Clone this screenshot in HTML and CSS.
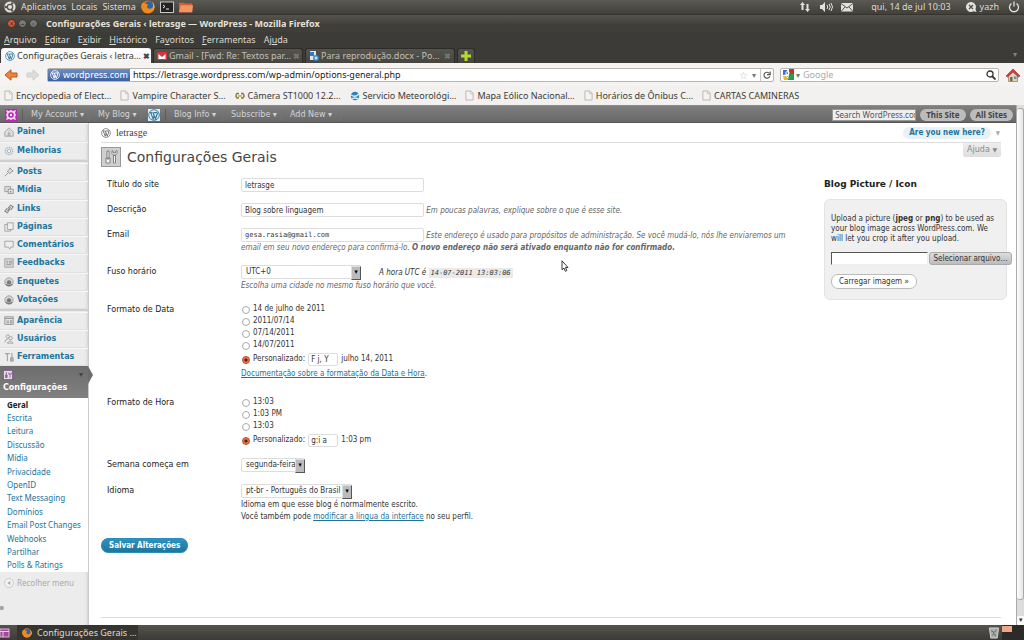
FILE: index.html
```html
<!DOCTYPE html>
<html lang="pt-br">
<head>
<meta charset="utf-8">
<title>Configurações Gerais ‹ letrasge — WordPress</title>
<link rel="stylesheet" href="styles.css">
</head>
<body>
<svg class="defs" width="0" height="0" aria-hidden="true">
  <symbol id="wp" viewBox="0 0 20 20"><circle cx="10" cy="10" r="8.8" fill="none" stroke="currentColor" stroke-width="1.6"/><path d="M3.5 6h4M9 6h5M4.5 6l4 10.500L10.500 10M8.500 6l4 10.500L15.500 8c.3-1.500-1-2-1-3.500" fill="none" stroke="currentColor" stroke-width="2"/></symbol>
  <symbol id="page" viewBox="0 0 10 12"><path d="M1 1h5.500L9 3.500V11H1z" fill="#f4f3f0" stroke="#b5b3af"/><path d="M6 1v3h3" fill="none" stroke="#c5c3bf"/></symbol>
  <symbol id="fox" viewBox="0 0 14 14"><circle cx="7" cy="7" r="6.500" fill="#e8701a"/><circle cx="8" cy="5.500" r="4.200" fill="#2f62a8"/><path d="M.6 4C2 2 3 3 5 4c2 0 3 1 1 2 0 3 3 4 6 1 1-2 0-4-1-5 3 2 3 6 1 9-3 3-8 3-10 0C0 9 0 6 .6 4z" fill="#f08a1c"/><path d="M11 2c3 3 3 6 1 9 1-3 1-6-1-9z" fill="#fbd047"/></symbol>
  <symbol id="gear" viewBox="0 0 12 12"><circle cx="6" cy="6" r="4.500" fill="#e1e5ea" stroke="#a9b4c2" stroke-width="1.400" stroke-dasharray="1.500 .8"/><circle cx="6" cy="6" r="2" fill="#f4f4f4" stroke="#9fafc2"/></symbol>
  <symbol id="poll" viewBox="0 0 12 12"><circle cx="6" cy="6" r="5" fill="#d5d5d5" stroke="#999"/><circle cx="6" cy="6.500" r="2.600" fill="#777"/><path d="M2 8.500c2 2.500 6 2.500 8 0" fill="none" stroke="#777" stroke-width="1.500"/></symbol>
</svg>

<header class="panel">
  <svg class="i12" viewBox="0 0 12 12"><circle cx="6" cy="6" r="5.600" fill="#e4e1da"/><circle cx="6" cy="6" r="2.700" fill="none" stroke="#55534d" stroke-width="1.300"/><circle cx="1.800" cy="6" r="1.200" fill="#55534d"/><circle cx="8.200" cy="2.400" r="1.200" fill="#55534d"/><circle cx="8.200" cy="9.600" r="1.200" fill="#55534d"/></svg>
  <span>Aplicativos</span><span>Locais</span><span>Sistema</span>
  <svg class="i14" viewBox="0 0 14 14"><use href="#fox"/></svg>
  <svg class="i14" viewBox="0 0 14 14"><rect x=".5" y="2" width="13" height="10.500" fill="#222" stroke="#c9c7c2"/><path d="M3 5l2 1.500L3 8M6 9h3" fill="none" stroke="#eee"/></svg>
  <svg class="i14" viewBox="0 0 16 14"><path d="M0 2h6l1 1h8v10H0z" fill="#d8602a"/><path d="M2 5h14l-1 8H0z" fill="#f59560"/></svg>
  <div class="tray">
    <svg class="i12" viewBox="0 0 12 12"><path d="M3.500 1L6 4H4.500v5h-2V4H1zM8.500 11L6 8h1.500V3h2v5H11z" fill="#e4e1da"/></svg>
    <svg class="i14 sound" viewBox="0 0 14 12"><path d="M1 4h2l3-3v10L3 8H1z" fill="#e4e1da"/><path d="M8 4q1.500 2 0 4M10 3q2.500 3 0 6M12 2q3 4 0 8" fill="none" stroke="#e4e1da"/></svg>
    <svg class="i12 mail" viewBox="0 0 12 12"><path d="M0 2h12v8.500H0z" fill="#e4e1da"/><path d="M0 2.500l6 4.500 6-4.500M0 10.500L4 6M12 10.500L8 6" fill="none" stroke="#55534d"/></svg>
    <time>qui, 14 de jul 10:03</time>
    <svg class="i12" viewBox="0 0 12 12"><path d="M6 1a5 5 0 1 0 2.500 9.300L11.500 11 10.500 8A5 5 0 0 0 6 1z" fill="#e4e1da"/><path d="M4 4l4 4M8 4L4 8" stroke="#55534d" stroke-width="1.400"/></svg>
    <span class="user">yazh</span>
    <svg class="i12" viewBox="0 0 12 12"><path d="M3.500 2.500a4.500 4.500 0 1 0 5 0M6 .5v5" fill="none" stroke="#e4e1da" stroke-width="1.300"/></svg>
  </div>
</header>

<div class="titlebar">
  <button class="wb close" aria-label="Fechar">×</button><button class="wb" aria-label="Minimizar">–</button><button class="wb" aria-label="Maximizar">▫</button>
  <span class="wtitle">Configurações Gerais ‹ letrasge — WordPress - Mozilla Firefox</span>
</div>
<nav class="menubar"><span><u>A</u>rquivo</span><span><u>E</u>ditar</span><span>E<u>x</u>ibir</span><span><u>H</u>istórico</span><span>Fa<u>v</u>oritos</span><span><u>F</u>erramentas</span><span>Aj<u>u</u>da</span></nav>
<div class="tabs">
  <div class="tab on"><svg class="i10 blue" viewBox="0 0 20 20"><use href="#wp"/></svg><span>Configurações Gerais ‹ letra…</span><b>✖</b></div>
  <div class="tab"><svg class="i10" viewBox="0 0 10 10"><rect y="1" width="10" height="8" rx="1" fill="#d8343b"/><path d="M1.500 3L5 6l3.500-3v5h-7z" fill="#fff"/></svg><span>Gmail - [Fwd: Re: Textos par…</span><b>✖</b></div>
  <div class="tab"><svg class="i10" viewBox="0 0 10 10"><path d="M1 0h6v9H1z" fill="#dbe9f5"/><rect x="1" y="1" width="4" height="4" fill="#2f7cc4"/><circle cx="7" cy="7" r="3" fill="#3988d0"/><path d="M5.500 7h3M7 5.500v3" stroke="#fff"/></svg><span>Para reprodução.docx - Po…</span><b>✖</b></div>
  <div class="tab plus"><svg class="i10" viewBox="0 0 10 10"><path d="M3.500 0h3v3.500H10v3H6.500V10h-3V6.500H0v-3h3.500z" fill="#b3dc2d"/></svg></div>
  <span class="tabmenu">▾</span>
</div>
<div class="navbar">
  <svg class="back" viewBox="0 0 14 12"><path d="M7 .8L1 6l6 5.200V8h6V4H7z" fill="#f08540" stroke="#b8561c"/></svg>
  <svg class="fwd" viewBox="0 0 14 12"><path d="M7 .8L13 6l-6 5.200V8H1V4h6z" fill="#dddcda" stroke="#cfcecb"/></svg>
  <div class="url"><span class="ident"><svg class="i10" viewBox="0 0 20 20"><use href="#wp"/></svg>wordpress.com</span><input aria-label="Endereço" value="https://letrasge.wordpress.com/wp-admin/options-general.php"><span class="star">☆</span><span class="dd">▾</span><button class="reload" aria-label="Recarregar"><svg class="i8" viewBox="0 0 10 10"><path d="M8 3A3.700 3.700 0 1 0 8.500 6.500M5 4.500h4V.5" fill="none" stroke="#555" stroke-width="1.400"/></svg></button></div>
  <div class="search"><svg class="i11" viewBox="0 0 11 11"><rect width="11" height="11" fill="#fff"/><path d="M6 0h5v5H6z" fill="#c9312b"/><path d="M6 5h5v6H5z" fill="#2d9a47"/><path d="M0 7h5v4H1z" fill="#f0b52c"/><path d="M0 1h4l1 4-5 1z" fill="#3d6fc4"/><circle cx="4.500" cy="4" r="1.600" fill="none" stroke="#fff"/><path d="M5 6q-3 1 0 3" fill="none" stroke="#fff"/></svg><span class="dd">▾</span><input aria-label="Pesquisar" placeholder="Google"><svg class="i10" viewBox="0 0 10 10"><circle cx="4" cy="4" r="3" fill="none" stroke="#333" stroke-width="1.300"/><path d="M6 6l3.500 3.500" stroke="#333" stroke-width="1.800"/></svg></div>
  <svg class="home" viewBox="0 0 14 14"><path d="M2.500 7v6.500h9V7L7 3z" fill="#e5d3ac" stroke="#8b7650" stroke-width=".7"/><path d="M0 8l7-7 7 7-1.500 1L7 4 1.500 9z" fill="#d23c47" stroke="#98242e" stroke-width=".6"/><rect x="4" y="9" width="2.500" height="4" fill="#7d6647"/><rect x="8" y="8.500" width="2.500" height="2.500" fill="#5e92c7"/></svg>
</div>
<div class="bookmarks">
  <a href="#"><svg class="pg"><use href="#page"/></svg>Encyclopedia of Elect…</a>
  <a href="#"><svg class="pg"><use href="#page"/></svg>Vampire Character S…</a>
  <a href="#"><svg class="i10" viewBox="0 0 10 10"><path d="M4 2.500H2Q0 5 2 7h2M6 2.500h2Q10 5 8 7H6" fill="none" stroke="#7d7d42" stroke-width="1.400"/><path d="M3 5h4" stroke="#c7a53b" stroke-width="1.500"/></svg>Câmera ST1000 12.2…</a>
  <a href="#"><svg class="i10" viewBox="0 0 10 10"><circle cx="5" cy="5" r="4.200" fill="#2e83b8"/><path d="M1 4q4 3 8-1M2 8q3-2 6 0" stroke="#d8eef6" stroke-width="1.300" fill="none"/></svg>Servicio Meteorológi…</a>
  <a href="#"><svg class="pg"><use href="#page"/></svg>Mapa Eólico Nacional…</a>
  <a href="#"><svg class="pg"><use href="#page"/></svg>Horários de Ônibus C…</a>
  <a href="#"><svg class="pg"><use href="#page"/></svg>CARTAS CAMINERAS</a>
</div>

<div class="viewport">
<div class="doc">
  <nav class="adminbar">
    <span class="avatar"><svg class="i12" viewBox="0 0 12 12"><rect width="12" height="12" fill="#b428b4"/><path d="M1 1l3 1 2-1 2 1 3-1-1 3 1 2-1 2 1 3-3-1-2 1-2-1-3 1 1-3-1-2 1-2z" fill="#f6d8f6"/><circle cx="6" cy="6" r="2.800" fill="#b428b4"/><circle cx="6" cy="6" r="1.200" fill="#fff"/></svg></span>
    <a class="a1" href="#">My Account ▾</a><a class="a2" href="#">My Blog ▾</a>
    <span class="avatar second"><svg class="i12" viewBox="0 0 20 20"><rect width="20" height="20" fill="#dcebf4"/><g color="#3b7b9e"><use href="#wp"/></g></svg></span>
    <a class="a3" href="#">Blog Info ▾</a><a class="a4" href="#">Subscribe ▾</a><a class="a5" href="#">Add New ▾</a>
    <form class="sitesearch"><input aria-label="Search" value="Search WordPress.com"><button type="button">This Site</button><button type="button">All Sites</button></form>
  </nav>
  <div class="wrap">
    <aside class="side">
      <ul class="grp g2">
        <li><svg class="i10" viewBox="0 0 12 12"><path d="M1 6l5-5 5 5v5H1zM5 11V7h2v4M6 4v1" fill="#e3e3e3" stroke="#999"/></svg><a href="#">Painel</a></li>
        <li><svg class="i10" viewBox="0 0 12 12"><use href="#gear"/></svg><a href="#">Melhorias</a></li>
      </ul>
      <ul class="grp g8">
        <li><svg class="i10" viewBox="0 0 12 12"><path d="M7 1l4 4-2 .5L7 8 4 5l2.500-2zM5 7L1 11" fill="#ddd" stroke="#8b8b8b"/></svg><a href="#">Posts</a></li>
        <li><svg class="i10" viewBox="0 0 12 12"><rect x="1" y="2" width="7" height="6" fill="#ddd" stroke="#999"/><rect x="5" y="5" width="6" height="5" fill="#eee" stroke="#888"/><circle cx="8" cy="8" r="1" fill="#888"/></svg><a href="#">Mídia</a></li>
        <li><svg class="i10" viewBox="0 0 12 12"><path d="M5 5l3-3.500 3 2L8 7M7 6l-3 4.500-3-2L4 5M4 8l4-4" fill="none" stroke="#888" stroke-width="1.300"/></svg><a href="#">Links</a></li>
        <li><svg class="i10" viewBox="0 0 12 12"><path d="M4 1h7v8H4zM4 3H1v8h7V9" fill="#eee" stroke="#999"/></svg><a href="#">Páginas</a></li>
        <li><svg class="i10" viewBox="0 0 12 12"><path d="M1 1.500h10v7H8L7 11 5 8.500H1z" fill="#eee" stroke="#999"/></svg><a href="#">Comentários</a></li>
        <li><svg class="i10" viewBox="0 0 12 12"><rect x="1" y="1" width="10" height="10" fill="#ddd" stroke="#999"/><path d="M3 4h2M3 6h2M3 8h6M6 4h4M6 6h4" stroke="#888"/></svg><a href="#">Feedbacks</a></li>
        <li><svg class="i10" viewBox="0 0 12 12"><use href="#poll"/></svg><a href="#">Enquetes</a></li>
        <li><svg class="i10" viewBox="0 0 12 12"><use href="#poll"/></svg><a href="#">Votações</a></li>
      </ul>
      <ul class="grp g3">
        <li><svg class="i10" viewBox="0 0 12 12"><rect x="1" y="1" width="10" height="9" fill="#e5e5e5" stroke="#888"/><path d="M1 3h10M3 6h3M3 8h3" stroke="#888"/><rect x="7" y="5" width="3" height="4" fill="#aaa"/></svg><a href="#">Aparência</a></li>
        <li><svg class="i10" viewBox="0 0 12 12"><circle cx="4.500" cy="3" r="2" fill="#eee" stroke="#999"/><circle cx="8" cy="5" r="2" fill="#eee" stroke="#999"/><path d="M1 10q1-5 4-4M4 11q3-5 7 0z" fill="#eee" stroke="#999"/></svg><a href="#">Usuários</a></li>
        <li><svg class="i10" viewBox="0 0 12 12"><path d="M1 2h6M4 2v9M9.500 1v10M8 7h3v4H8z" fill="#ddd" stroke="#999" stroke-width="1.200"/></svg><a href="#">Ferramentas</a></li>
      </ul>
      <div class="current"><div class="crow"><svg class="i10" viewBox="0 0 12 12"><rect x=".5" y=".5" width="11" height="11" fill="#e8dcec" stroke="#80598c"/><path d="M4 2.500V9M3 6h2v3H3zM8.500 5v4.500M7 3v2h3V3" fill="none" stroke="#80598c"/></svg><span>▾</span></div>Configurações</div>
      <ul class="sub"><li><b>Geral</b></li><li><a href="#">Escrita</a></li><li><a href="#">Leitura</a></li><li><a href="#">Discussão</a></li><li><a href="#">Mídia</a></li><li><a href="#">Privacidade</a></li><li><a href="#">OpenID</a></li><li><a href="#">Text Messaging</a></li><li><a href="#">Domínios</a></li><li><a href="#">Email Post Changes</a></li><li><a href="#">Webhooks</a></li><li><a href="#">Partilhar</a></li><li><a href="#">Polls &amp; Ratings</a></li></ul>
      <div class="collapse"><svg class="i10" viewBox="0 0 12 12"><circle cx="6" cy="6" r="5.300" fill="#f3f3f3" stroke="#c5c5c5"/><path d="M7.500 3.500v5L4 6z" fill="#aaa"/></svg>Recolher menu</div>
      <svg class="speck" viewBox="0 0 5 4"><path d="M0 1h3M0 3h3" stroke="#666"/><path d="M3 .5v3" stroke="#888"/></svg>
    </aside>
    <main>
      <div class="head"><svg class="i10 grey" viewBox="0 0 20 20"><use href="#wp"/></svg><a class="blog" href="#">letrasge</a><a class="new" href="#">Are you new here?</a><span class="newdd">▼</span></div>
      <div class="titlerow">
        <svg class="toolicon" viewBox="0 0 20 20"><rect x=".5" y=".5" width="19" height="19" fill="#cfcfcf" stroke="#999"/><path d="M6 4h2v8H6zM5 11h4v5H5zM12.500 8h2v8h-2zM11 3.500v3l2 2h1l2-2v-3l-1.500 1v1.500h-2V4.500z" fill="#f5f5f5" stroke="#777" stroke-width=".9"/></svg>
        <h1>Configurações Gerais</h1><button class="help">Ajuda <small>▼</small></button>
      </div>
      <div class="cols">
      <form class="settings">
        <div class="row"><label class="th" for="t">Título do site</label><div><input class="txt" id="t" value="letrasge"></div></div>
        <div class="row"><label class="th" for="d">Descrição</label><div><input class="txt" id="d" value="Blog sobre linguagem"> <em>Em poucas palavras, explique sobre o que é esse site.</em></div></div>
        <div class="row"><label class="th" for="e">Email</label><div><input class="txt mono" id="e" value="gesa.rasia@gmail.com"> <em>Este endereço é usado para propósitos de administração. Se você mudá-lo, nós lhe enviaremos um<br>email em seu novo endereço para confirmá-lo. <b>O novo endereço não será ativado enquanto não for confirmado.</b></em></div></div>
        <div class="row"><label class="th" for="z">Fuso horário</label><div><div class="zone"><span class="sel wide"><select id="z"><option>UTC+0</option></select></span><i class="utc">A hora UTC é <code>14-07-2011 13:03:06</code></i></div><div class="line"><em>Escolha uma cidade no mesmo fuso horário que você.</em></div></div></div>
        <div class="row date"><span class="th">Formato de Data</span><div>
          <label class="opt"><input type="radio" name="df">14 de julho de 2011</label>
          <label class="opt"><input type="radio" name="df">2011/07/14</label>
          <label class="opt"><input type="radio" name="df">07/14/2011</label>
          <label class="opt"><input type="radio" name="df">14/07/2011</label>
          <div class="opt custom"><label><input type="radio" name="df" checked><span>Personalizado:</span></label><input class="txt tiny" aria-label="Formato de data personalizado" value="F j, Y"><span>julho 14, 2011</span></div>
          <div class="docs"><a href="#">Documentação sobre a formatação da Data e Hora</a>.</div></div></div>
        <div class="row time"><span class="th">Formato de Hora</span><div>
          <label class="opt"><input type="radio" name="tf">13:03</label>
          <label class="opt"><input type="radio" name="tf">1:03 PM</label>
          <label class="opt"><input type="radio" name="tf">13:03</label>
          <div class="opt custom"><label><input type="radio" name="tf" checked><span>Personalizado:</span></label><input class="txt tiny" aria-label="Formato de hora personalizado" value="g:i a"><span>1:03 pm</span></div></div></div>
        <div class="row"><label class="th" for="w">Semana começa em</label><div class="stack"><span class="sel week"><select id="w"><option>segunda-feira</option></select></span></div></div>
        <div class="row"><label class="th" for="l">Idioma</label><div class="stack"><span class="sel lang"><select id="l"><option>pt-br - Português do Brasil</option></select></span><div class="line">Idioma em que esse blog é normalmente escrito.</div><div class="line">Você também pode <a href="#">modificar a língua da interface</a> no seu perfil.</div></div></div>
        <button class="save" type="button">Salvar Alterações</button>
      </form>
      <section class="picture"><h2>Blog Picture / Icon</h2>
        <div class="box"><p>Upload a picture (<b>jpeg</b> or <b>png</b>) to be used as your blog image across WordPress.com. We will let you crop it after you upload.</p>
        <div class="file"><input aria-label="Arquivo"><button type="button">Selecionar arquivo…</button></div>
        <button class="upload" type="button">Carregar imagem »</button></div>
      </section>
      </div>
      <div class="footline"></div>
    </main>
  </div>
</div>
<div class="scroll"><i></i><span>▾</span></div>
</div>

<footer class="taskbar">
  <svg class="i10" viewBox="0 0 10 10"><rect x="0" y="1" width="9" height="8" fill="#a04a98" stroke="#e0b4dc"/><path d="M0 3.500h9M3 3.500V9" stroke="#e8c8e6"/></svg>
  <button class="task"><svg class="i10" viewBox="0 0 14 14"><use href="#fox"/></svg>Configurações Gerais …</button>
  <div class="corner"><svg class="i12" viewBox="0 0 12 13"><path d="M1 1h10l-1.500 11h-7z" fill="#a9aeaa" stroke="#d7dad6"/><path d="M3 4l3 2 3-3M4 9l2-2 2 3" stroke="#5c625f" fill="none"/></svg><span class="ws"><i></i><i></i></span></div>
</footer>
<svg class="cursor" viewBox="0 0 8 12"><path d="M1 .8v9l2-1.700 1.300 3.200 1.500-.7L4.500 7.500H7z" fill="#fff" stroke="#222" stroke-width=".9"/></svg>
</body>
</html>
```
FILE: styles.css
```css
* { box-sizing: border-box; }
html, body { height: 100%; }
body { margin: 0; display: flex; flex-direction: column; overflow: hidden; font: 8px/12px "Noto Sans", sans-serif; color: #333; background: #fff; }
input, button, select { font: inherit; color: inherit; margin: 0; padding: 0; border: 0; background: none; min-width: 0; }
ul { list-style: none; margin: 0; padding: 0; }
svg { flex: none; display: block; }
.defs { position: absolute; }
.i8 { width: 8px; height: 8px; }
.i10 { width: 10px; height: 10px; }
.i11 { width: 11px; height: 11px; }
.i12 { width: 12px; height: 12px; }
.i14 { width: 14px; height: 14px; }

.panel, .titlebar, .menubar, .tabs, .navbar, .bookmarks, .taskbar { flex: none; display: flex; align-items: center; font-size: 9px; white-space: nowrap; }
.panel { height: 15px; padding: 0 4px; gap: 5px; background: linear-gradient(#5b5953, #403f3a); color: #dfdbd2; border-bottom: 1px solid #35342f; }
.tray { margin-left: auto; display: flex; align-items: center; }
.sound { margin-left: 8px; }
.mail { margin-left: 8px; }
.panel .tray { margin-right: 0; }
.tray time { margin: 0 14px 0 20px; padding-left: 0; }
.mail + time { margin-left: 18px; padding-right: 0; }
.user { margin: 0 9px 0 3px; }
.titlebar { height: 17px; padding: 0 7px; gap: 2px; background: linear-gradient(#54534d, #3f3e39 60%); color: #e6e2da; }
.wb { width: 9px; height: 9px; border-radius: 50%; background: #7b7973; color: #3a3935; font-size: 8px; line-height: 7px; border: 1px solid #33322e; }
.wb.close { background: #e9572b; }
.wtitle { margin-left: 6px; font-weight: bold; }
.menubar { height: 16px; padding: 0 4px; gap: 8px; background: #3c3b37; color: #dfdbd2; }
.tabs { height: 15px; padding: 0 1px; gap: 2px; background: #3c3b37; color: #c4c1ba; align-items: stretch; }
.tab { width: 150px; display: flex; align-items: center; gap: 2px; padding: 0 3px; border-radius: 3px 3px 0 0; background: linear-gradient(#55534e, #46453f); border: 1px solid #2c2b28; border-bottom: 0; }
.tab b { margin-left: auto; color: #77756f; font-size: 8px; }
.tab.on { background: linear-gradient(#fff, #f2f1f0); color: #3c3b37; border-color: #f8f7f6; }
.tab.on b { color: #444; }
.tab.plus { width: 18px; }
.tabmenu { margin-left: auto; padding-right: 6px; color: #85837d; font-size: 8px; }
.blue { color: #3d7fa5; }
.grey { color: #777; }
.navbar { height: 23px; padding: 0 4px; background: #f4f3f2; }
.back, .fwd { width: 14px; height: 12px; }
.fwd { margin-left: 8px; }
.url, .search { display: flex; align-items: center; height: 14px; background: #fff; border: 1px solid #b9b5ae; border-radius: 2px; }
.url { flex: 1; margin-left: 7px; }
.url input { flex: 1; padding-left: 3px; height: 12px; color: #222; }
.ident { display: flex; align-items: center; gap: 3px; height: 12px; padding: 0 2px; background: linear-gradient(#6d8dc4, #3d619f); color: #fff; }
.star { color: #bbb; font-size: 10px; }
.dd { color: #777; font-size: 8px; padding: 0 4px; }
.reload { height: 12px; padding: 0 2px; border-left: 1px solid #c9c5be; }
.search { width: 219px; margin-left: 6px; padding: 0 2px; }
.search .dd { padding: 0 3px 0 2px; }
.search input { flex: 1; }
.search input::placeholder { color: #aaa; }
.home { width: 14px; height: 14px; margin-left: 7px; }
.bookmarks { height: 19px; padding: 0 4px; gap: 9px; background: #f2f1f0; }
.bookmarks a { display: flex; align-items: center; gap: 3px; color: #3c3b37; text-decoration: none; }
.pg { width: 9px; height: 11px; }

.viewport { flex: 1; min-height: 0; display: flex; }
.doc { flex: 1; display: flex; flex-direction: column; min-width: 0; }
.adminbar { flex: none; height: 18px; padding-top: 1px; display: flex; align-items: center; background: linear-gradient(#7f7f7f, #686868); border-top: 1px solid #8c8c8c; border-bottom: 1px solid #555; font: 8px/12px "DejaVu Sans", sans-serif; white-space: nowrap; }
.adminbar a { color: #d4d4d4; text-decoration: none; border-right: 1px solid #757575; }
.avatar { width: 23px; padding-left: 5px; border-right: 1px solid #5c5c5c; }
.a1 { width: 67px; padding-left: 8px; }
.a2 { width: 51px; padding-left: 8px; }
.avatar.second { width: 25px; padding-left: 7px; }
.a3 { width: 57px; padding-left: 8px; }
.a4 { width: 59px; padding-left: 8px; }
.a5 { padding: 0 8px; }
.sitesearch { margin-left: auto; display: flex; align-items: center; gap: 4px; padding-right: 3px; font-family: "Noto Sans", sans-serif; }
.sitesearch input { width: 84px; height: 12px; padding-left: 2px; background: #eee; color: #555; border: 1px solid #999; }
.sitesearch button { height: 12px; padding: 0 6px; border-radius: 6px; background: #bcbcbc; color: #444; font-weight: bold; line-height: 12px; }
.wrap { flex: 1; display: flex; min-height: 0; }

.side { width: 89px; flex: none; background: #ececec; border-right: 1px solid #ccc; box-shadow: inset -3px 0 3px -2px #d0d0d0; font: 8px/12px "DejaVu Sans", sans-serif; }
.grp { display: flex; flex-direction: column; border-bottom: 2px solid #d0d0d0; margin-bottom: 1px; }
.grp li { flex: 1; display: flex; align-items: center; gap: 3px; padding-left: 4px; border-top: 1px solid #f7f7f7; border-bottom: 1px solid #e0e0e0; }
.grp a { color: #21759b; font-weight: bold; text-decoration: none; }
.g2 { height: 39px; }
.g8 { height: 148px; }
.g3 { height: 54px; border-bottom: 0; margin: 0; }
.current { position: relative; height: 32px; padding: 4px 3px 0; background: linear-gradient(#6d6d6d, #808080); color: #fff; font-weight: bold; line-height: 16px; }
.current::after { content: ""; position: absolute; left: 88px; top: 0; border: solid transparent; border-width: 9px 0 9px 5px; border-left-color: #6d6d6d; }
.crow { display: flex; align-items: center; justify-content: space-between; height: 10px; padding-right: 2px; color: #444; }
.sub { display: flex; flex-direction: column; height: 174px; background: #fff; padding-left: 7px; font-family: "Noto Sans", sans-serif; }
.sub li { flex: 1; display: flex; align-items: center; white-space: nowrap; }
.sub a { color: #21759b; text-decoration: none; }
.sub b { color: #222; }
.collapse { display: flex; align-items: center; gap: 3px; padding: 5px 4px; color: #aaa; font-family: "Noto Sans", sans-serif; }
.speck { width: 5px; height: 4px; margin-top: 12px; }

main { flex: 1; min-width: 0; display: flex; flex-direction: column; padding: 0 15px 0 12px; font-family: "DejaVu Sans Condensed", "Noto Sans", sans-serif; }
.head { height: 20px; display: flex; align-items: center; border-bottom: 1px solid #ddd; gap: 5px; }
.blog { font: 10px/12px "Liberation Serif", serif; color: #444; text-decoration: none; }
.new { margin-left: auto; padding: 0 6px; border-radius: 6px; background: #e9f1f5; color: #21759b; font-weight: bold; text-decoration: none; }
.newdd { color: #aaa; font-size: 6px; padding-right: 1px; }
.titlerow { display: flex; align-items: center; height: 32px; gap: 6px; padding-bottom: 4px; }
.toolicon { width: 20px; height: 20px; }
h1 { margin: 0; font: 14px/20px "DejaVu Sans", sans-serif; color: #464646; }
.help { margin-left: auto; align-self: flex-start; padding: 0 4px; height: 14px; background: linear-gradient(#eee, #ddd); color: #888; border-radius: 0 0 2px 2px; font: 8px/14px "DejaVu Sans", sans-serif; }
.help small { font-size: 6px; }
.cols { display: flex; }
.settings { flex: 1; min-width: 0; }
.row { display: grid; grid-template-columns: 134px 1fr; padding: 3px 0 8px 6px; }
.th { padding-top: 1px; font: 8px/12px "DejaVu Sans", sans-serif; color: #222; }
.settings a { color: #21759b; }
em { color: #666; white-space: nowrap; }
.txt { width: 183px; height: 14px; padding: 0 3px; border: 1px solid #ddd; border-radius: 2px; vertical-align: middle; }
.mono { font-family: "DejaVu Sans Mono", monospace; font-size: 7px; }
.zone { display: flex; align-items: center; height: 15px; }
.stack { display: flex; flex-direction: column; }
.sel { position: relative; height: 15px; }
.sel select { display: block; appearance: none; width: 100%; height: 14px; padding-left: 4px; border: 1px solid #ddd; border-radius: 2px; background: #fff; }
.sel::after { content: "▾"; position: absolute; right: 0; top: 1px; width: 8px; height: 12px; background: #bbb; border: 1px solid; border-color: #ddd #555 #555 #ddd; color: #000; font-size: 7px; line-height: 10px; text-align: center; pointer-events: none; }
.wide { width: 120px; }
.week { width: 64px; }
.lang { width: 111px; }
.utc { margin-left: 18px; color: #333; }
code { font: italic 7px/10px "DejaVu Sans Mono", monospace; background: #eaeaea; padding: 1px 2px; }
.line { height: 12px; }
.opt { display: flex; align-items: center; height: 12px; }
.opt [type=radio] { appearance: none; width: 8px; height: 8px; margin: 1px 3px 0 1px; border: 1px solid #aaa; border-radius: 50%; background: #fff; }
.opt [type=radio]:checked { border-color: #b5492a; background: radial-gradient(#5a1a0a 0 1px, #f0764c 2px); }
.custom { height: 16px; gap: 3px; }
.custom label { display: flex; align-items: center; }
.tiny { width: 30px; height: 13px; padding: 0 2px; }
.docs { height: 14px; line-height: 14px; }
.date { padding-bottom: 12px; }
.time { padding-bottom: 7px; }
.save { display: block; margin-top: 7px; height: 15px; padding: 0 7px; border-radius: 7px; background: linear-gradient(#2a93bf, #21759b); color: #fff; font-weight: bold; line-height: 13px; border: 1px solid #298cba; }
.picture { width: 183px; flex: none; margin-right: -6px; }
h2 { margin: 3px 0 9px; font: bold 9px/12px "DejaVu Sans", sans-serif; color: #222; }
.box { height: 101px; padding: 14px 6px 0; background: #f0f0f0; border: 1px solid #e3e3e3; border-radius: 6px; }
.box p { margin: 0 0 8px; line-height: 10px; }
.file { display: flex; margin-right: -12px; }
.file input { width: 97px; height: 13px; background: #fff; border: 1px solid #eee; border-top-color: #555; border-left-color: #555; }
.file button { flex: 1; height: 13px; margin-left: 1px; border: 1px solid #aaa; border-radius: 3px; background: linear-gradient(#ddd, #bbb); line-height: 11px; white-space: nowrap; }
.upload { margin-top: 9px; height: 15px; padding: 0 7px; border: 1px solid #bbb; border-radius: 7px; background: #fff; line-height: 13px; }
.footline { margin-top: auto; margin-bottom: 7px; border-top: 1px solid #ddd; }
.scroll { width: 8px; flex: none; display: flex; flex-direction: column; background: #ddd; border-left: 1px solid #aaa; }
.scroll i { flex: 1; margin: 3px 0 16px; background: linear-gradient(90deg, #fff, #e4e4e4); border: 1px solid #aaa; border-left: 0; border-radius: 3px; }
.scroll span { height: 9px; line-height: 8px; font-size: 7px; background: #fafafa; text-align: center; }

.taskbar { height: 15px; background: linear-gradient(#55534d, #3c3b37); color: #dfdbd2; }
.task { display: flex; align-items: center; gap: 5px; width: 121px; height: 15px; margin-left: 7px; padding-left: 5px; background: #35342f; white-space: nowrap; }
.corner { margin-left: auto; display: flex; align-items: center; gap: 2px; }
.ws { display: flex; width: 22px; height: 15px; background: #2c2b29; }
.ws i { width: 10px; height: 6px; margin-top: 1px; background: #f0a488; }
.ws i + i { background: none; }
.cursor { position: absolute; left: 561px; top: 260px; width: 8px; height: 12px; }
```
